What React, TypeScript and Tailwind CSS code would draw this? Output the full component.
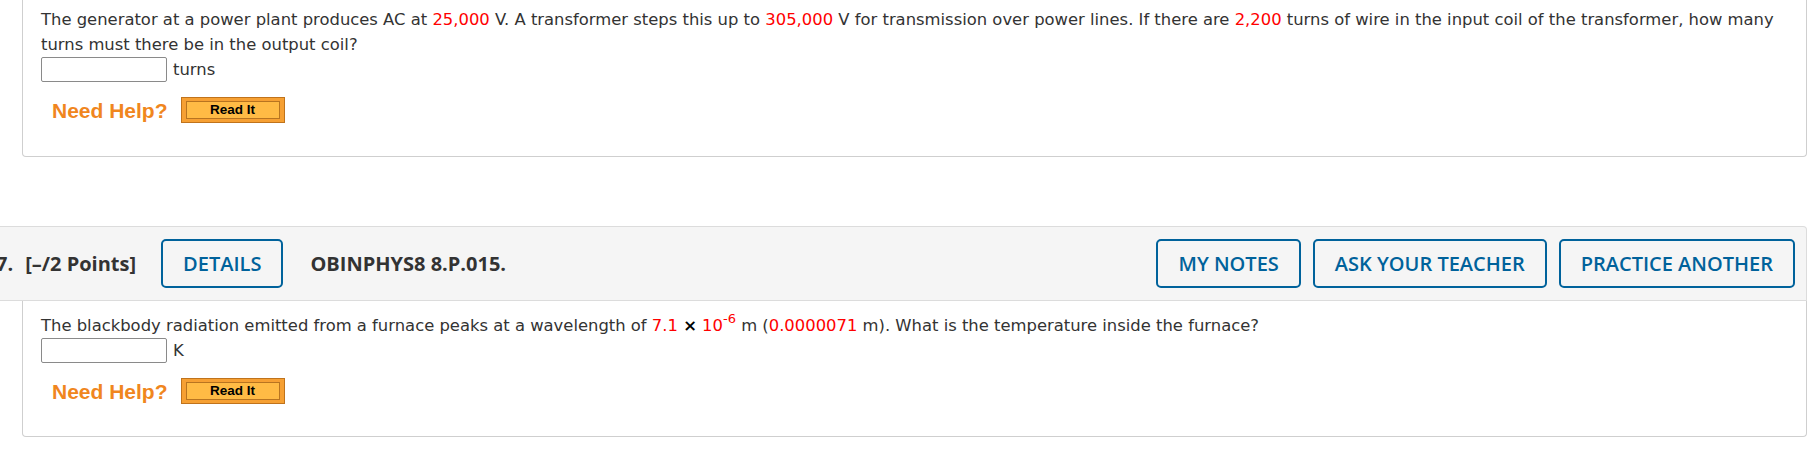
import React from "react";

const body = { fontFamily: '"DejaVu Sans", Verdana, sans-serif' };
const open = { fontFamily: '"Open Sans", "Noto Sans", sans-serif' };
const arial = { fontFamily: '"Liberation Sans", Arial, sans-serif' };

function R({ children }: { children: React.ReactNode }) {
  return <span className="text-[#ff0000]">{children}</span>;
}

function AnswerRow({ unit }: { unit: string }) {
  return (
    <div className="flex items-center h-[25px]">
      <div className="w-[126px] h-[25px] border border-[#8a8a8a] rounded-[2px] bg-white" />
      <span className="ml-[6px]">{unit}</span>
    </div>
  );
}

function NeedHelp() {
  return (
    <div className="flex items-center h-[26px] mt-[15px] ml-[11px] gap-[13px]">
      <span className="text-[21px] font-bold text-[#f0861e] leading-none" style={arial}>
        Need Help?
      </span>
      <div className="w-[104px] h-[26px] border border-[#c0731c] bg-[#f6a033] px-[4px] py-[3px]">
        <div
          className="w-full h-full border border-[#b87420] bg-[#ffbb45] flex items-center justify-center text-[13.5px] font-bold text-black leading-none"
          style={arial}
        >
          Read It
        </div>
      </div>
    </div>
  );
}

function OutlineBtn({ children }: { children: React.ReactNode }) {
  return (
    <button
      className="h-[49px] px-[20px] border-2 border-[#00629b] rounded-[5px] text-[20px] font-semibold text-[#00629b] bg-[#f5f5f5] leading-none"
      style={open}
    >
      {children}
    </button>
  );
}

export default function App() {
  return (
    <div className="w-full overflow-hidden bg-white text-[#333]">
      <div className="-ml-[20px] mr-[6px]">
        {/* top card (cut off) */}
        <div
          className="ml-[42px] border-x border-b border-[#cfcfcf] rounded-b-[4px] pl-[18px] pr-[18px] pt-[7px] pb-[33px] text-[16.4px] leading-[25px]"
          style={body}
        >
          <p>
            The generator at a power plant produces AC at <R>25,000</R> V. A transformer steps this up to{" "}
            <R>305,000</R> V for transmission over power lines. If there are <R>2,200</R> turns of wire in the
            input coil of the transformer, how many turns must there be in the output coil?
          </p>
          <AnswerRow unit="turns" />
          <NeedHelp />
        </div>

        {/* question 7 header */}
        <div
          className="mt-[69px] h-[75px] flex items-center bg-[#f5f5f5] border-y border-r border-[#dcdcdc] rounded-tr-[4px] pl-[16px] pr-[11px]"
          style={open}
        >
          <span className="text-[20px] font-bold text-[#333]">7.</span>
          <span className="ml-[12px] text-[20px] font-bold text-[#333]">[–/2 Points]</span>
          <div className="ml-[25px]">
            <OutlineBtn>DETAILS</OutlineBtn>
          </div>
          <span className="ml-[27px] text-[20px] font-bold text-[#333]">OBINPHYS8 8.P.015.</span>
          <div className="ml-auto flex gap-[12px]">
            <OutlineBtn>MY NOTES</OutlineBtn>
            <OutlineBtn>ASK YOUR TEACHER</OutlineBtn>
            <OutlineBtn>PRACTICE ANOTHER</OutlineBtn>
          </div>
        </div>

        {/* question 7 body */}
        <div
          className="ml-[42px] border-x border-b border-[#cfcfcf] rounded-b-[4px] pl-[18px] pr-[18px] pt-[12px] pb-[32px] text-[16.4px] leading-[25px]"
          style={body}
        >
          <p>
            The blackbody radiation emitted from a furnace peaks at a wavelength of <R>7.1</R>{" "}
            <span className="font-bold text-black">×</span> <R>10</R>
            <sup className="text-[#ff0000] text-[13px] -top-[8px]">-6</sup> m (<R>0.0000071</R> m). What is the
            temperature inside the furnace?
          </p>
          <AnswerRow unit="K" />
          <NeedHelp />
        </div>
      </div>
    </div>
  );
}
